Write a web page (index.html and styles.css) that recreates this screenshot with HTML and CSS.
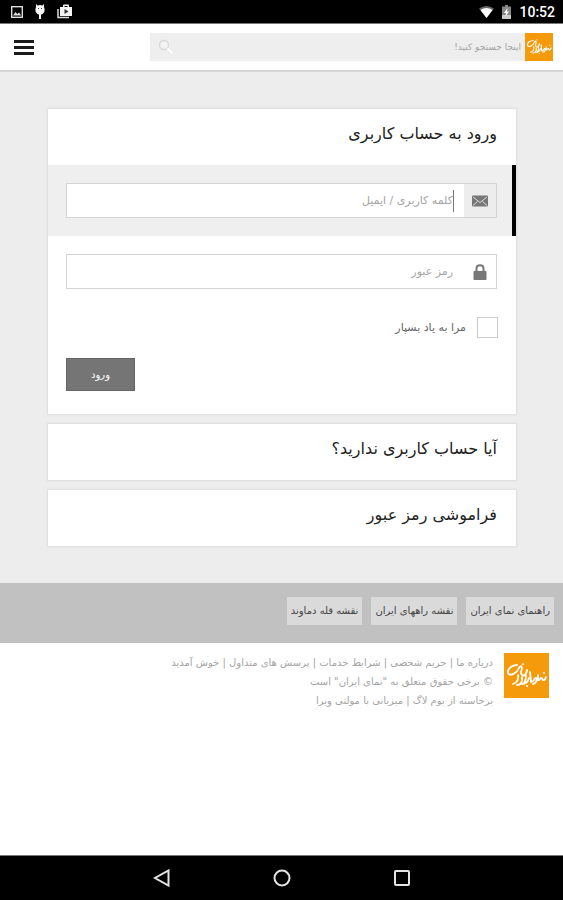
FILE: index.html
```html
<!DOCTYPE html>
<html lang="fa" dir="rtl">
<head>
<meta charset="utf-8">
<meta name="viewport" content="width=device-width, initial-scale=1">
<title>ورود به حساب کاربری</title>
<link rel="stylesheet" href="styles.css">
</head>
<body>
<svg class="defs" aria-hidden="true">
  <symbol id="logo" viewBox="0 0 45 45">
    <rect width="45" height="45" fill="#f59a0b"/>
    <g fill="none" stroke="#fff" stroke-width="1.8" stroke-linecap="round" stroke-linejoin="round">
      <path d="M13 12C8 12 3 16 4 20C6 24 13 20 15 15C17 11 19 14 17 19C17 24 22 24 23 17"/>
      <path d="M14 22C15 26 13 30 9 31M18 24C19 28 17 32 13 32M22 23C22 28 20 31 18 31C22 31 24 29 25 25"/>
      <path d="M26 19L27 29C30 29 30 25 32 25C34 27 31 31 29 31M34 22L34 27C36 28 36 24 38 25C38 28 41 28 42 24"/>
    </g>
    <g fill="#fff"><circle cx="19" cy="11" r="1"/><circle cx="40" cy="20" r="1"/><circle cx="23" cy="33" r="1"/></g>
  </symbol>
</svg>

<div class="status" dir="ltr">
  <div class="status-group">
    <svg width="12" height="12" viewBox="0 0 12 12"><rect x=".7" y=".7" width="10.6" height="10.6" fill="none" stroke="#ddd" stroke-width="1.4"/><path d="M2 9.5L4.5 6L6.3 8L8 6.500L10.200 9.500Z" fill="#ddd"/></svg>
    <svg width="12" height="16" viewBox="0 0 12 16"><path d="M2 0L3.500 1.500Q6 .7 8.500 1.500L10 0L10 3Q11 5 10.500 7.500Q9.500 10 7 10.500V15H5V10.500Q2.500 10 1.500 7.500Q1 5 2 3Z" fill="#f4f4f4"/><path d="M4 4.500h1M7 4.500h1" stroke="#555"/></svg>
    <svg width="16" height="15" viewBox="0 0 16 15"><path d="M1 5V13.500H12" fill="none" stroke="#ddd" stroke-width="1.500"/><path d="M3 3H6V1.500Q6 .5 7 .5H11Q12 .5 12 1.500V3H15V12H3Z" fill="#f4f4f4"/><path d="M7.500 3V2H10.500V3Z" fill="#000"/><path d="M7.500 5L11.500 7.500L7.500 10Z" fill="#333"/></svg>
  </div>
  <div class="status-group status-right">
    <svg width="15" height="12" viewBox="0 0 15 12"><path d="M0 2.500Q7.500-2.500 15 2.500L7.500 12Z" fill="#666"/><path d="M1.500 4Q7.500 0 13.500 4L7.500 12Z" fill="#fff"/></svg>
    <svg width="9" height="14" viewBox="0 0 9 14"><path d="M3 0H6V1.500H9V14H0V1.500H3Z" fill="#888"/><path d="M0 10H9V14H0Z" fill="#ccc"/><path d="M5.500 3L2 8H4L3.500 11.500L7 6.500H5Z" fill="#fff"/></svg>
    <span class="clock">10:52</span>
  </div>
</div>

<header class="topbar">
  <a class="brand" href="#" aria-label="نمای ایران"><svg class="brand-logo"><use href="#logo"/></svg></a>
  <form class="search">
    <input class="search-input" type="search" placeholder="اینجا جستجو کنید!" aria-label="جستجو">
    <button class="search-button" type="button" aria-label="جستجو">
      <svg width="16" height="16" viewBox="0 0 16 16" fill="#f4f4f4" stroke="#d8d8d8"><circle cx="6" cy="6" r="4.500" stroke-width="1.300"/><path d="M9.500 9.500L14.500 14.500" stroke="#fff" stroke-width="2"/></svg>
    </button>
  </form>
  <button class="menu" type="button" aria-label="فهرست"><span></span><span></span><span></span></button>
</header>

<main class="page">
  <section class="card">
    <h1 class="card-title">ورود به حساب کاربری</h1>
    <form>
      <div class="row row-active">
        <div class="field">
          <label class="field-icon field-icon-active" for="user" aria-label="کلمه کاربری">
            <svg width="16" height="12" viewBox="0 0 16 12"><rect y=".5" width="16" height="11" rx="1" fill="#777"/><path d="M1 2L8 7.500L15 2M1 10.500L5.500 6.500M15 10.500L10.500 6.500" fill="none" stroke="#ddd"/></svg>
          </label>
          <span class="caret"></span>
          <input class="field-input" id="user" type="text" placeholder="کلمه کاربری / ایمیل">
        </div>
      </div>
      <div class="row">
        <div class="field">
          <label class="field-icon" for="pass" aria-label="رمز عبور">
            <svg width="14" height="16" viewBox="0 0 14 16"><path d="M3.500 8V4.500Q3.500 1.200 7 1.200T10.500 4.500V8" fill="none" stroke="#777" stroke-width="2"/><rect x=".5" y="7" width="13" height="9" rx="1" fill="#777"/></svg>
          </label>
          <input class="field-input" id="pass" type="password" placeholder="رمز عبور">
        </div>
      </div>
      <div class="remember">
        <input class="check" id="remember" type="checkbox">
        <label for="remember">مرا به یاد بسپار</label>
      </div>
      <div class="actions"><button class="submit" type="submit">ورود</button></div>
    </form>
  </section>
  <section class="card"><h2 class="card-title"><a href="#">آیا حساب کاربری ندارید؟</a></h2></section>
  <section class="card"><h2 class="card-title"><a href="#">فراموشی رمز عبور</a></h2></section>
</main>

<nav class="links">
  <a href="#">راهنمای نمای ایران</a>
  <a href="#">نقشه راههای ایران</a>
  <a href="#">نقشه قله دماوند</a>
</nav>

<footer class="footer">
  <svg class="footer-logo" role="img" aria-label="نمای ایران"><use href="#logo"/></svg>
  <div class="footer-text">
    <p><a href="#">درباره ما</a> | <a href="#">حریم شخصی</a> | <a href="#">شرایط خدمات</a> | <a href="#">پرسش های متداول</a> | <a href="#">خوش آمدید</a></p>
    <p>© برخی حقوق متعلق به "نمای ایران" است</p>
    <p>برخاسته از <a href="#">بوم لاگ</a> | میزبانی با <a href="#">مولتی ویرا</a></p>
  </div>
</footer>

<div class="android" dir="ltr">
  <button type="button" aria-label="بازگشت"><svg width="18" height="18" viewBox="0 0 18 18"><path d="M15.500 1.500V16.500L2 9Z"/></svg></button>
  <button type="button" aria-label="خانه"><svg width="18" height="18" viewBox="0 0 18 18"><circle cx="9" cy="9" r="7.500"/></svg></button>
  <button type="button" aria-label="برنامه‌ها"><svg width="18" height="18" viewBox="0 0 18 18"><rect x="2" y="2" width="14" height="14" rx="1"/></svg></button>
</div>
</body>
</html>
```
FILE: styles.css
```css
* { box-sizing: border-box; }
body {
  margin: 0;
  min-height: 100vh;
  display: flex;
  flex-direction: column;
  background: #fff;
  color: #222;
  font-family: "DejaVu Sans", sans-serif;
  font-size: 11px;
}
input, button { font: inherit; margin: 0; }
button { border: 0; padding: 0; background: none; }
a { color: inherit; text-decoration: none; }
p, h1, h2 { margin: 0; font-weight: normal; }
.defs { position: absolute; width: 0; height: 0; }

.status {
  display: flex;
  justify-content: space-between;
  align-items: center;
  height: 24px;
  padding: 0 8px 0 11px;
  background: #000;
  border-bottom: 1px solid #777;
}
.status-group { display: flex; align-items: center; gap: 11px; }
.status-right { gap: 8px; }
.clock { color: #fff; font: 500 14px/24px Roboto, sans-serif; }

.topbar {
  display: flex;
  align-items: center;
  height: 48px;
  padding: 0 10px 0 14px;
  border-bottom: 2px solid #d6d6d6;
}
.brand, .brand-logo { display: block; width: 28px; height: 28px; }
.search {
  display: flex;
  align-items: center;
  flex: 1;
  height: 28px;
  padding: 0 4px 0 8px;
  background: #eee;
}
.search-input {
  flex: 1;
  min-width: 0;
  padding: 0;
  border: 0;
  background: none;
  font-size: 9px;
}
.search-button { display: flex; }
::placeholder { color: #a4a4a4; opacity: 1; }
.menu {
  display: flex;
  flex-direction: column;
  gap: 3px;
  width: 20px;
  margin-right: 116px;
}
.menu span { height: 3px; background: #1b1b1b; }

.page {
  display: flex;
  flex-direction: column;
  gap: 10px;
  padding: 37px 47px 37px 48px;
  background: #ededed;
}
.card { background: #fff; box-shadow: 0 0 2px 1px #dcdcdc; }
.card-title {
  padding: 11px 19px 17px;
  font-size: 16px;
  line-height: 28px;
}
.row { padding: 18px 15px 18px 18px; border-right: 4px solid transparent; }
.row-active { background: #efefef; border-right-color: #000; }
.field {
  display: flex;
  align-items: center;
  height: 35px;
  background: #fff;
  border: 1px solid #d4d4d4;
}
.field-icon {
  display: flex;
  align-items: center;
  justify-content: center;
  width: 32px;
  height: 33px;
  margin-left: 11px;
}
.field-icon-active { background: #ededed; }
.caret { width: 1px; height: 22px; margin-right: -1px; background: #777; }
.field-input {
  flex: 1;
  min-width: 0;
  height: 33px;
  padding: 0;
  border: 0;
  background: none;
  outline: 0;
}
.remember {
  display: flex;
  align-items: center;
  gap: 11px;
  padding: 10px 18px;
  color: #666;
}
.check {
  appearance: none;
  width: 21px;
  height: 21px;
  border: 1px solid #ccc;
  background: #fff;
}
.actions { display: flex; justify-content: flex-end; padding: 10px 18px 23px; }
.submit {
  width: 69px;
  height: 33px;
  background: #757575;
  border: 1px solid #666;
  color: #fff;
  font-size: 10px;
}

.links {
  display: flex;
  gap: 9px;
  padding: 14px 9px 18px;
  background: #c1c1c1;
}
.links a {
  padding: 0 4px;
  background: #dadada;
  color: #444;
  font-size: 10px;
  line-height: 28px;
}

.footer { display: flex; flex: 1; align-items: flex-start; gap: 11px; padding: 10px 14px; }
.footer-logo { width: 45px; height: 45px; }
.footer-text { color: #a4a4a4; font-size: 10px; line-height: 19px; }

.android {
  display: flex;
  justify-content: center;
  align-items: center;
  gap: 102px;
  height: 45px;
  background: #000;
  border-top: 1px solid #777;
}
.android button { display: flex; }
.android svg { fill: none; stroke: #e4e4e4; stroke-width: 2; }
```
